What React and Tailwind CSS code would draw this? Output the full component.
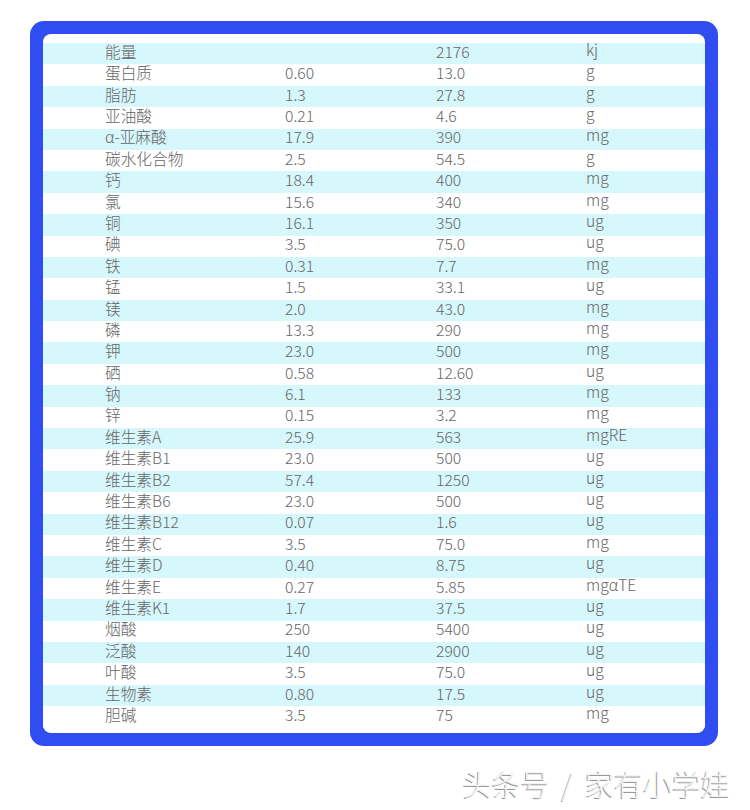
import React from "react";

const rows = [
  ["能量", "", "2176", "kj"],
  ["蛋白质", "0.60", "13.0", "g"],
  ["脂肪", "1.3", "27.8", "g"],
  ["亚油酸", "0.21", "4.6", "g"],
  ["α-亚麻酸", "17.9", "390", "mg"],
  ["碳水化合物", "2.5", "54.5", "g"],
  ["钙", "18.4", "400", "mg"],
  ["氯", "15.6", "340", "mg"],
  ["铜", "16.1", "350", "ug"],
  ["碘", "3.5", "75.0", "ug"],
  ["铁", "0.31", "7.7", "mg"],
  ["锰", "1.5", "33.1", "ug"],
  ["镁", "2.0", "43.0", "mg"],
  ["磷", "13.3", "290", "mg"],
  ["钾", "23.0", "500", "mg"],
  ["硒", "0.58", "12.60", "ug"],
  ["钠", "6.1", "133", "mg"],
  ["锌", "0.15", "3.2", "mg"],
  ["维生素A", "25.9", "563", "mgRE"],
  ["维生素B1", "23.0", "500", "ug"],
  ["维生素B2", "57.4", "1250", "ug"],
  ["维生素B6", "23.0", "500", "ug"],
  ["维生素B12", "0.07", "1.6", "ug"],
  ["维生素C", "3.5", "75.0", "mg"],
  ["维生素D", "0.40", "8.75", "ug"],
  ["维生素E", "0.27", "5.85", "mgαTE"],
  ["维生素K1", "1.7", "37.5", "ug"],
  ["烟酸", "250", "5400", "ug"],
  ["泛酸", "140", "2900", "ug"],
  ["叶酸", "3.5", "75.0", "ug"],
  ["生物素", "0.80", "17.5", "ug"],
  ["胆碱", "3.5", "75", "mg"],
];

function Row({ cells, striped }) {
  const [name, per100kj, per100g, unit] = cells;
  return (
    <div
      className={`flex items-center h-[21.4px] pl-[62px] pb-[4px] ${
        striped ? "bg-[#d6f7fb]" : "bg-white"
      }`}
    >
      <span className="w-[180px]">{name}</span>
      <span className="w-[151px]">{per100kj}</span>
      <span className="w-[150px]">{per100g}</span>
      <span className="pb-[4px]">{unit}</span>
    </div>
  );
}

export default function App() {
  return (
    <div
      className="w-[750px] h-[810px] bg-white pt-[21px] pl-[30px] text-[15.7px] leading-none font-light text-[#666]"
      style={{ fontFamily: '"Noto Sans CJK SC", "Noto Sans", sans-serif' }}
    >
      <div className="w-[688px] h-[725px] bg-[#2f4df0] rounded-[14px] p-[13px]">
        <div className="h-full bg-white rounded-[8px] pt-[9px] overflow-hidden">
          {rows.map((r, i) => (
            <Row key={r[0]} cells={r} striped={i % 2 === 0} />
          ))}
        </div>
      </div>
      <div className="flex justify-end items-center pr-[20px] mt-[23px] text-[29px] leading-none text-[#f4f4f4] [text-shadow:-1px_1px_0_#999]">
        <span>头条号</span>
        <span className="mx-[12px]">/</span>
        <span>家有小学娃</span>
      </div>
    </div>
  );
}
